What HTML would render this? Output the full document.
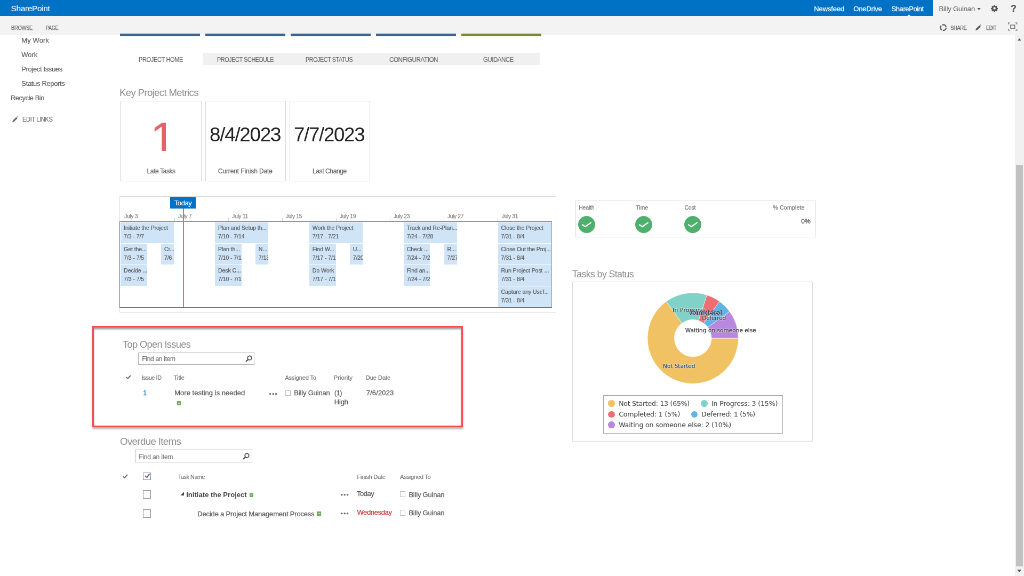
<!DOCTYPE html>
<html lang="en"><head><meta charset="utf-8"><title>Project Home - SharePoint</title>
<style>
html,body{margin:0;padding:0;width:1024px;height:576px;overflow:hidden;background:#fff;}
#stage{-webkit-text-stroke:0.25px;filter:blur(0.4px);will-change:transform;position:absolute;left:0;top:0;width:1920px;height:1080px;transform:scale(0.533333);transform-origin:0 0;font-family:"Liberation Sans", sans-serif;overflow:hidden;background:#fff;}
#stage div,#stage span,#stage svg{box-sizing:border-box;}
</style></head><body><div id="stage">
<header class="suite-bar" aria-label="SharePoint suite bar">
<div style="position:absolute;left:0.00px;top:0.00px;width:1920.00px;height:30.00px;background:#f3f3f3;"></div>
<div style="position:absolute;left:0.00px;top:0.00px;width:1749.38px;height:30.00px;background:#0072c6;"></div>
<svg style="position:absolute;left:1831.69px;top:14.81px;width:6.94px;height:3.94px" viewBox="0 0 10 6"><path d="M0 0H10L5 6Z" fill="#555"/></svg>
<svg style="position:absolute;left:1858.31px;top:8.62px;width:13.12px;height:13.12px" viewBox="0 0 24 24"><path fill="#555" fill-rule="evenodd" d="M10 1h4l.6 3 1.9.8 2.5-1.7 2.9 2.9-1.7 2.500.8 1.900 3 .6v4l-3 .6-.8 1.900 1.700 2.500-2.900 2.900-2.500-1.700-1.900.8-.600 3h-4l-.6-3-1.900-.8-2.500 1.700-2.900-2.900 1.700-2.500-.8-1.900-3-.6v-4l3-.6.8-1.900-1.700-2.500 2.900-2.900 2.500 1.700 1.900-.8zM12 8a4 4 0 100 8 4 4 0 000-8z"/></svg>
<span style="position:absolute;left:20.62px;top:8.44px;font-size:15.5px;line-height:15.5px;color:#fff;white-space:nowrap;letter-spacing:-0.40px;-webkit-text-stroke:0.100px;">SharePoint</span>
<span style="position:absolute;left:1526.25px;top:9.62px;font-size:13px;line-height:13px;color:#fff;white-space:nowrap;letter-spacing:-0.12px;">Newsfeed</span>
<span style="position:absolute;left:1600.31px;top:9.62px;font-size:13px;line-height:13px;color:#fff;white-space:nowrap;letter-spacing:-0.21px;">OneDrive</span>
<span style="position:absolute;left:1671.56px;top:9.62px;font-size:13px;line-height:13px;color:#fff;white-space:nowrap;letter-spacing:-0.42px;">SharePoint</span>
<span style="position:absolute;left:1760.62px;top:9.62px;font-size:13px;line-height:13px;color:#6e6e6e;white-space:nowrap;letter-spacing:-0.17px;-webkit-text-stroke:0.150px;">Billy Guinan</span>
<span style="position:absolute;left:1894.88px;top:6.51px;font-size:18px;line-height:18px;color:#555;white-space:nowrap;font-weight:700;">?</span>
</header>
<div class="ribbon-row" aria-label="Ribbon">
<div style="position:absolute;left:0.00px;top:30.00px;width:1920.00px;height:34.50px;background:#f3f3f3;"></div>
<svg style="position:absolute;left:1761.38px;top:44.06px;width:15.37px;height:15.37px" viewBox="0 0 16 16"><circle cx="8" cy="8" r="5.500" fill="none" stroke="#5e5e5e" stroke-width="2.500" stroke-dasharray="9.300 2.200"/></svg>
<svg style="position:absolute;left:1829.44px;top:45.75px;width:11.25px;height:11.25px" viewBox="0 0 12 12"><path d="M0 12l1-3.500 7-7 2.500 2.500-7 7zM9 .5l1-.5 2 2-.5 1z" fill="#555"/></svg>
<svg style="position:absolute;left:1890.00px;top:42.00px;width:17.62px;height:15.75px" viewBox="0 0 19 17"><g fill="none" stroke="#666" stroke-width="1.500"><rect x="5.300" y="5.400" width="8.400" height="6.600"/><path d="M1 4V1h3M15 1h3v3M18 13v3h-3M4 16H1v-3"/></g></svg>
<span style="position:absolute;left:20.62px;top:47.13px;font-size:11px;line-height:11px;color:#666;white-space:nowrap;letter-spacing:-0.39px;transform-origin:0 0;transform:scaleX(0.8581);">BROWSE</span>
<span style="position:absolute;left:86.25px;top:47.13px;font-size:11px;line-height:11px;color:#666;white-space:nowrap;letter-spacing:-0.39px;transform-origin:0 0;transform:scaleX(0.8192);">PAGE</span>
<span style="position:absolute;left:1782.38px;top:46.75px;font-size:11px;line-height:11px;color:#666;white-space:nowrap;letter-spacing:-0.39px;transform-origin:0 0;transform:scaleX(0.8559);">SHARE</span>
<span style="position:absolute;left:1848.75px;top:46.75px;font-size:11px;line-height:11px;color:#666;white-space:nowrap;letter-spacing:-0.39px;transform-origin:0 0;transform:scaleX(0.8156);">EDIT</span>
</div>
<nav class="quick-launch" aria-label="Quick launch">
<svg style="position:absolute;left:22.88px;top:217.50px;width:11.25px;height:11.25px" viewBox="0 0 12 12"><path d="M0 12l1-3.500 7-7 2.500 2.500-7 7zM9 .5l1-.5 2 2-.5 1z" fill="#6a6a6a"/></svg>
<span style="position:absolute;left:40.31px;top:68.68px;font-size:13px;line-height:13px;color:#606060;white-space:nowrap;letter-spacing:0.09px;-webkit-text-stroke:0.200px;">My Work</span>
<span style="position:absolute;left:40.31px;top:95.68px;font-size:13px;line-height:13px;color:#606060;white-space:nowrap;letter-spacing:-0.04px;-webkit-text-stroke:0.200px;">Work</span>
<span style="position:absolute;left:40.31px;top:122.59px;font-size:13px;line-height:13px;color:#606060;white-space:nowrap;letter-spacing:-0.37px;-webkit-text-stroke:0.200px;">Project Issues</span>
<span style="position:absolute;left:40.31px;top:149.50px;font-size:13px;line-height:13px;color:#606060;white-space:nowrap;letter-spacing:-0.34px;-webkit-text-stroke:0.200px;">Status Reports</span>
<span style="position:absolute;left:19.88px;top:176.50px;font-size:13px;line-height:13px;color:#606060;white-space:nowrap;letter-spacing:-0.46px;transform-origin:0 0;transform:scaleX(0.9888);-webkit-text-stroke:0.200px;">Recycle Bin</span>
<span style="position:absolute;left:42.19px;top:218.03px;font-size:12px;line-height:12px;color:#6a6a6a;white-space:nowrap;letter-spacing:-0.42px;transform-origin:0 0;transform:scaleX(0.9259);-webkit-text-stroke:0.150px;">EDIT LINKS</span>
</nav>
<div class="tiles" aria-label="Navigation tiles">
<div style="position:absolute;left:225.00px;top:63.47px;width:150.00px;height:4.12px;background:#3d668f;"></div>
<div style="position:absolute;left:385.00px;top:63.47px;width:150.00px;height:4.12px;background:#3d668f;"></div>
<div style="position:absolute;left:545.00px;top:63.47px;width:150.00px;height:4.12px;background:#3d668f;"></div>
<div style="position:absolute;left:705.00px;top:63.47px;width:150.00px;height:4.12px;background:#3d668f;"></div>
<div style="position:absolute;left:865.00px;top:63.47px;width:150.00px;height:4.12px;background:#768a3a;"></div>
</div>
<div class="tabs" aria-label="Project tabs">
<div style="position:absolute;left:380.62px;top:98.62px;width:631.88px;height:23.44px;background:#f0f0f0;"></div>
<span style="position:absolute;left:260.16px;top:105.86px;font-size:12.5px;line-height:12.5px;color:#666;white-space:nowrap;letter-spacing:-0.44px;transform-origin:0 0;transform:scaleX(0.8850);-webkit-text-stroke:0.150px;">PROJECT HOME</span>
<span style="position:absolute;left:406.88px;top:105.86px;font-size:12.5px;line-height:12.5px;color:#666;white-space:nowrap;letter-spacing:-0.44px;transform-origin:0 0;transform:scaleX(0.8643);-webkit-text-stroke:0.150px;">PROJECT SCHEDULE</span>
<span style="position:absolute;left:573.28px;top:105.86px;font-size:12.5px;line-height:12.5px;color:#666;white-space:nowrap;letter-spacing:-0.44px;transform-origin:0 0;transform:scaleX(0.8571);-webkit-text-stroke:0.150px;">PROJECT STATUS</span>
<span style="position:absolute;left:729.94px;top:105.86px;font-size:12.5px;line-height:12.5px;color:#666;white-space:nowrap;letter-spacing:-0.44px;transform-origin:0 0;transform:scaleX(0.9272);-webkit-text-stroke:0.150px;">CONFIGURATION</span>
<span style="position:absolute;left:905.62px;top:105.86px;font-size:12.5px;line-height:12.5px;color:#666;white-space:nowrap;letter-spacing:-0.44px;transform-origin:0 0;transform:scaleX(0.9089);-webkit-text-stroke:0.150px;">GUIDANCE</span>
</div>
<section class="metrics" aria-label="Key Project Metrics">
<div style="position:absolute;left:224.81px;top:189.00px;width:153.56px;height:151.31px;border:1.300px solid #d6d6d6;background:#fff;"></div>
<div style="position:absolute;left:384.75px;top:189.00px;width:151.13px;height:151.31px;border:1.300px solid #d6d6d6;background:#fff;"></div>
<div style="position:absolute;left:542.62px;top:189.00px;width:151.50px;height:151.31px;border:1.300px solid #d6d6d6;background:#fff;"></div>
<div style="position:absolute;left:277.50px;top:215.62px;width:45.00px;height:67.31px;overflow:hidden"><span style="position:absolute;left:3.9px;top:0.0px;font-size:87px;line-height:87px;color:#e2646a;-webkit-text-stroke:0">1</span></div>
<span style="position:absolute;left:224.06px;top:164.10px;font-size:19px;line-height:19px;color:#8c8c8c;white-space:nowrap;letter-spacing:-0.67px;transform-origin:0 0;transform:scaleX(0.9796);-webkit-text-stroke:0;">Key Project Metrics</span>
<span style="position:absolute;left:392.81px;top:234.37px;font-size:37px;line-height:37px;color:#222;white-space:nowrap;letter-spacing:-1.30px;transform-origin:0 0;transform:scaleX(0.9968);-webkit-text-stroke:0;">8/4/2023</span>
<span style="position:absolute;left:550.78px;top:234.37px;font-size:37px;line-height:37px;color:#222;white-space:nowrap;letter-spacing:-1.30px;transform-origin:0 0;transform:scaleX(0.9898);-webkit-text-stroke:0;">7/7/2023</span>
<span style="position:absolute;left:275.62px;top:314.97px;font-size:12px;line-height:12px;color:#666;white-space:nowrap;letter-spacing:-0.41px;">Late Tasks</span>
<span style="position:absolute;left:408.75px;top:314.97px;font-size:12px;line-height:12px;color:#666;white-space:nowrap;letter-spacing:-0.10px;">Current Finish Date</span>
<span style="position:absolute;left:585.94px;top:314.97px;font-size:12px;line-height:12px;color:#666;white-space:nowrap;letter-spacing:-0.38px;">Last Change</span>
</section>
<section class="timeline" aria-label="Timeline">
<div style="position:absolute;left:223.69px;top:367.88px;width:819.19px;height:218.25px;border:1px solid #dcdcdc;background:#fff;"></div>
<div style="position:absolute;left:326.68px;top:407.81px;width:1.01px;height:8.44px;background:#d2d2d2;"></div>
<div style="position:absolute;left:427.74px;top:407.81px;width:1.01px;height:8.44px;background:#d2d2d2;"></div>
<div style="position:absolute;left:528.81px;top:407.81px;width:1.01px;height:8.44px;background:#d2d2d2;"></div>
<div style="position:absolute;left:629.87px;top:407.81px;width:1.01px;height:8.44px;background:#d2d2d2;"></div>
<div style="position:absolute;left:730.93px;top:407.81px;width:1.01px;height:8.44px;background:#d2d2d2;"></div>
<div style="position:absolute;left:831.99px;top:407.81px;width:1.01px;height:8.44px;background:#d2d2d2;"></div>
<div style="position:absolute;left:933.06px;top:407.81px;width:1.01px;height:8.44px;background:#d2d2d2;"></div>
<div style="position:absolute;left:226.12px;top:416.81px;width:100.05px;height:39.56px;background:#cfe4f6;overflow:hidden;"><span style="position:absolute;left:6.0px;top:3.2px;font-size:10.6px;line-height:15.94px;color:#5a5a5a;-webkit-text-stroke:0.200px;white-space:nowrap;letter-spacing:-0.1px">Initiate the Project<br>7/3 - 7/7</span></div>
<div style="position:absolute;left:226.12px;top:457.03px;width:49.77px;height:39.28px;background:#cfe4f6;overflow:hidden;"><span style="position:absolute;left:6.0px;top:3.2px;font-size:10.6px;line-height:15.94px;color:#5a5a5a;-webkit-text-stroke:0.200px;white-space:nowrap;letter-spacing:-0.1px">Get the...<br>7/3 - 7/5</span></div>
<div style="position:absolute;left:301.92px;top:457.03px;width:24.26px;height:39.28px;background:#cfe4f6;overflow:hidden;"><span style="position:absolute;left:6.0px;top:3.2px;font-size:10.6px;line-height:15.94px;color:#5a5a5a;-webkit-text-stroke:0.200px;white-space:nowrap;letter-spacing:-0.1px">Cr...<br>7/6</span></div>
<div style="position:absolute;left:226.12px;top:496.97px;width:49.77px;height:39.28px;background:#cfe4f6;overflow:hidden;"><span style="position:absolute;left:6.0px;top:3.2px;font-size:10.6px;line-height:15.94px;color:#5a5a5a;-webkit-text-stroke:0.200px;white-space:nowrap;letter-spacing:-0.1px">Decide ...<br>7/3 - 7/5</span></div>
<div style="position:absolute;left:402.98px;top:416.81px;width:100.05px;height:39.56px;background:#cfe4f6;overflow:hidden;"><span style="position:absolute;left:6.0px;top:3.2px;font-size:10.6px;line-height:15.94px;color:#5a5a5a;-webkit-text-stroke:0.200px;white-space:nowrap;letter-spacing:-0.1px">Plan and Setup th...<br>7/10 - 7/14</span></div>
<div style="position:absolute;left:402.98px;top:457.03px;width:49.77px;height:39.28px;background:#cfe4f6;overflow:hidden;"><span style="position:absolute;left:6.0px;top:3.2px;font-size:10.6px;line-height:15.94px;color:#5a5a5a;-webkit-text-stroke:0.200px;white-space:nowrap;letter-spacing:-0.1px">Plan th...<br>7/10 - 7/12</span></div>
<div style="position:absolute;left:478.78px;top:457.03px;width:24.26px;height:39.28px;background:#cfe4f6;overflow:hidden;"><span style="position:absolute;left:6.0px;top:3.2px;font-size:10.6px;line-height:15.94px;color:#5a5a5a;-webkit-text-stroke:0.200px;white-space:nowrap;letter-spacing:-0.1px">N...<br>7/13</span></div>
<div style="position:absolute;left:402.98px;top:496.97px;width:49.77px;height:39.28px;background:#cfe4f6;overflow:hidden;"><span style="position:absolute;left:6.0px;top:3.2px;font-size:10.6px;line-height:15.94px;color:#5a5a5a;-webkit-text-stroke:0.200px;white-space:nowrap;letter-spacing:-0.1px">Desk C...<br>7/10 - 7/12</span></div>
<div style="position:absolute;left:579.84px;top:416.81px;width:100.05px;height:39.56px;background:#cfe4f6;overflow:hidden;"><span style="position:absolute;left:6.0px;top:3.2px;font-size:10.6px;line-height:15.94px;color:#5a5a5a;-webkit-text-stroke:0.200px;white-space:nowrap;letter-spacing:-0.1px">Work the Project<br>7/17 - 7/21</span></div>
<div style="position:absolute;left:579.84px;top:457.03px;width:49.77px;height:39.28px;background:#cfe4f6;overflow:hidden;"><span style="position:absolute;left:6.0px;top:3.2px;font-size:10.6px;line-height:15.94px;color:#5a5a5a;-webkit-text-stroke:0.200px;white-space:nowrap;letter-spacing:-0.1px">Find W...<br>7/17 - 7/19</span></div>
<div style="position:absolute;left:655.64px;top:457.03px;width:24.26px;height:39.28px;background:#cfe4f6;overflow:hidden;"><span style="position:absolute;left:6.0px;top:3.2px;font-size:10.6px;line-height:15.94px;color:#5a5a5a;-webkit-text-stroke:0.200px;white-space:nowrap;letter-spacing:-0.1px">U...<br>7/20</span></div>
<div style="position:absolute;left:579.84px;top:496.97px;width:49.77px;height:39.28px;background:#cfe4f6;overflow:hidden;"><span style="position:absolute;left:6.0px;top:3.2px;font-size:10.6px;line-height:15.94px;color:#5a5a5a;-webkit-text-stroke:0.200px;white-space:nowrap;letter-spacing:-0.1px">Do Work<br>7/17 - 7/19</span></div>
<div style="position:absolute;left:756.70px;top:416.81px;width:100.05px;height:39.56px;background:#cfe4f6;overflow:hidden;"><span style="position:absolute;left:6.0px;top:3.2px;font-size:10.6px;line-height:15.94px;color:#5a5a5a;-webkit-text-stroke:0.200px;white-space:nowrap;letter-spacing:-0.1px">Track and Re-Plan...<br>7/24 - 7/28</span></div>
<div style="position:absolute;left:756.70px;top:457.03px;width:49.77px;height:39.28px;background:#cfe4f6;overflow:hidden;"><span style="position:absolute;left:6.0px;top:3.2px;font-size:10.6px;line-height:15.94px;color:#5a5a5a;-webkit-text-stroke:0.200px;white-space:nowrap;letter-spacing:-0.1px">Check ...<br>7/24 - 7/26</span></div>
<div style="position:absolute;left:832.50px;top:457.03px;width:24.26px;height:39.28px;background:#cfe4f6;overflow:hidden;"><span style="position:absolute;left:6.0px;top:3.2px;font-size:10.6px;line-height:15.94px;color:#5a5a5a;-webkit-text-stroke:0.200px;white-space:nowrap;letter-spacing:-0.1px">R...<br>7/27</span></div>
<div style="position:absolute;left:756.70px;top:496.97px;width:49.77px;height:39.28px;background:#cfe4f6;overflow:hidden;"><span style="position:absolute;left:6.0px;top:3.2px;font-size:10.6px;line-height:15.94px;color:#5a5a5a;-webkit-text-stroke:0.200px;white-space:nowrap;letter-spacing:-0.1px">Find an...<br>7/24 - 7/26</span></div>
<div style="position:absolute;left:933.56px;top:416.81px;width:101.06px;height:39.56px;background:#cfe4f6;overflow:hidden;"><span style="position:absolute;left:6.0px;top:3.2px;font-size:10.6px;line-height:15.94px;color:#5a5a5a;-webkit-text-stroke:0.200px;white-space:nowrap;letter-spacing:-0.1px">Close the Project<br>7/31 - 8/4</span></div>
<div style="position:absolute;left:933.56px;top:457.03px;width:101.06px;height:39.28px;background:#cfe4f6;overflow:hidden;"><span style="position:absolute;left:6.0px;top:3.2px;font-size:10.6px;line-height:15.94px;color:#5a5a5a;-webkit-text-stroke:0.200px;white-space:nowrap;letter-spacing:-0.1px">Close Out the Proj...<br>7/31 - 8/4</span></div>
<div style="position:absolute;left:933.56px;top:496.97px;width:101.06px;height:39.28px;background:#cfe4f6;overflow:hidden;"><span style="position:absolute;left:6.0px;top:3.2px;font-size:10.6px;line-height:15.94px;color:#5a5a5a;-webkit-text-stroke:0.200px;white-space:nowrap;letter-spacing:-0.1px">Run Project Post-...<br>7/31 - 8/4</span></div>
<div style="position:absolute;left:933.56px;top:536.91px;width:101.06px;height:38.72px;background:#cfe4f6;overflow:hidden;"><span style="position:absolute;left:6.0px;top:3.2px;font-size:10.6px;line-height:15.94px;color:#5a5a5a;-webkit-text-stroke:0.200px;white-space:nowrap;letter-spacing:-0.1px">Capture any Usef...<br>7/31 - 8/4</span></div>
<div style="position:absolute;left:224.44px;top:415.31px;width:810.75px;height:161.81px;border:1.700px solid #6c6c6c;border-top-color:#7c7c7c;border-right-color:#8a96a2;border-left-width:1.500px;background:transparent;"></div>
<div style="position:absolute;left:318.75px;top:369.38px;width:48.38px;height:21.94px;background:#0072c6;"></div>
<div style="position:absolute;left:342.75px;top:391.31px;width:2.25px;height:184.31px;background:#5a9de0;"></div>
<span style="position:absolute;left:233.06px;top:399.98px;font-size:10.8px;line-height:10.8px;color:#828282;white-space:nowrap;letter-spacing:-0.38px;transform-origin:0 0;transform:scaleX(0.9685);-webkit-text-stroke:0.250px;">July 3</span>
<span style="position:absolute;left:334.12px;top:399.98px;font-size:10.8px;line-height:10.8px;color:#828282;white-space:nowrap;letter-spacing:-0.38px;transform-origin:0 0;transform:scaleX(0.9685);-webkit-text-stroke:0.250px;">July 7</span>
<span style="position:absolute;left:435.19px;top:399.98px;font-size:10.8px;line-height:10.8px;color:#828282;white-space:nowrap;letter-spacing:-0.38px;transform-origin:0 0;transform:scaleX(0.9750);-webkit-text-stroke:0.250px;">July 11</span>
<span style="position:absolute;left:536.25px;top:399.98px;font-size:10.8px;line-height:10.8px;color:#828282;white-space:nowrap;letter-spacing:-0.38px;transform-origin:0 0;transform:scaleX(0.9507);-webkit-text-stroke:0.250px;">July 15</span>
<span style="position:absolute;left:637.31px;top:399.98px;font-size:10.8px;line-height:10.8px;color:#828282;white-space:nowrap;letter-spacing:-0.38px;transform-origin:0 0;transform:scaleX(0.9507);-webkit-text-stroke:0.250px;">July 19</span>
<span style="position:absolute;left:738.38px;top:399.98px;font-size:10.8px;line-height:10.8px;color:#828282;white-space:nowrap;letter-spacing:-0.38px;transform-origin:0 0;transform:scaleX(0.9507);-webkit-text-stroke:0.250px;">July 23</span>
<span style="position:absolute;left:839.44px;top:399.98px;font-size:10.8px;line-height:10.8px;color:#828282;white-space:nowrap;letter-spacing:-0.38px;transform-origin:0 0;transform:scaleX(0.9507);-webkit-text-stroke:0.250px;">July 27</span>
<span style="position:absolute;left:940.50px;top:399.98px;font-size:10.8px;line-height:10.8px;color:#828282;white-space:nowrap;letter-spacing:-0.38px;transform-origin:0 0;transform:scaleX(0.9507);-webkit-text-stroke:0.250px;">July 31</span>
<span style="position:absolute;left:326.81px;top:374.12px;font-size:13px;line-height:13px;color:#fff;white-space:nowrap;letter-spacing:-0.43px;-webkit-text-stroke:0.100px;">Today</span>
</section>
<section class="health" aria-label="Project health">
<div style="position:absolute;left:1078.88px;top:375.56px;width:451.13px;height:69.94px;border:1px solid #dcdcdc;background:#fff;"></div>
<svg style="position:absolute;left:1083.75px;top:405.00px;width:31.88px;height:31.88px" viewBox="0 0 34 34"><circle cx="17" cy="17" r="17" fill="#4fb06d"/><path d="M8.600 17.600L14.200 21.300L25.400 13.500" fill="none" stroke="#fff" stroke-width="2.500" stroke-linecap="round" stroke-linejoin="round"/></svg>
<svg style="position:absolute;left:1191.09px;top:405.00px;width:31.88px;height:31.88px" viewBox="0 0 34 34"><circle cx="17" cy="17" r="17" fill="#4fb06d"/><path d="M8.600 17.600L14.200 21.300L25.400 13.500" fill="none" stroke="#fff" stroke-width="2.500" stroke-linecap="round" stroke-linejoin="round"/></svg>
<svg style="position:absolute;left:1282.97px;top:405.00px;width:31.88px;height:31.88px" viewBox="0 0 34 34"><circle cx="17" cy="17" r="17" fill="#4fb06d"/><path d="M8.600 17.600L14.200 21.300L25.400 13.500" fill="none" stroke="#fff" stroke-width="2.500" stroke-linecap="round" stroke-linejoin="round"/></svg>
<span style="position:absolute;left:1085.16px;top:383.55px;font-size:10.5px;line-height:10.5px;color:#777;white-space:nowrap;letter-spacing:-0.18px;">Health</span>
<span style="position:absolute;left:1192.03px;top:383.55px;font-size:10.5px;line-height:10.5px;color:#777;white-space:nowrap;letter-spacing:0.04px;">Time</span>
<span style="position:absolute;left:1283.44px;top:383.55px;font-size:10.5px;line-height:10.5px;color:#777;white-space:nowrap;letter-spacing:-0.20px;">Cost</span>
<span style="position:absolute;left:1449.38px;top:383.55px;font-size:10.5px;line-height:10.5px;color:#777;white-space:nowrap;letter-spacing:0.21px;">% Complete</span>
<span style="position:absolute;left:1502.34px;top:408.72px;font-size:12px;line-height:12px;color:#444;white-space:nowrap;letter-spacing:-0.09px;">0%</span>
</section>
<section class="tasks-by-status" aria-label="Tasks by Status">
<div style="position:absolute;left:1073.06px;top:528.19px;width:450.94px;height:299.44px;border:1px solid #dcdcdc;background:#fff;"></div>
<svg style="position:absolute;left:0;top:0;width:1920px;height:1080px;overflow:visible" viewBox="0 0 1024 576"><path d="M738.30 338.20A45.4 45.4 0 1 1 666.21 301.47L682.03 323.23A18.5 18.5 0 1 0 711.40 338.20Z" fill="#f0c264" stroke="#fff" stroke-width="0.35"/><path d="M666.21 301.47A45.4 45.4 0 0 1 706.93 295.02L698.62 320.61A18.5 18.5 0 0 0 682.03 323.23Z" fill="#80d2c8" stroke="#fff" stroke-width="0.35"/><path d="M706.93 295.02A45.4 45.4 0 0 1 719.59 301.47L703.77 323.23A18.5 18.5 0 0 0 698.62 320.61Z" fill="#ec6f74" stroke="#fff" stroke-width="0.35"/><path d="M719.59 301.47A45.4 45.4 0 0 1 729.63 311.51L707.87 327.33A18.5 18.5 0 0 0 703.77 323.23Z" fill="#5fb4e6" stroke="#fff" stroke-width="0.35"/><path d="M729.63 311.51A45.4 45.4 0 0 1 738.30 338.20L711.40 338.20A18.5 18.5 0 0 0 707.87 327.33Z" fill="#b888e0" stroke="#fff" stroke-width="0.35"/></svg>
<div style="position:absolute;left:1130.62px;top:741.19px;width:336.94px;height:71.62px;border:1.700px solid #a6a6a6;background:#fff;"></div>
<div style="position:absolute;left:1140.19px;top:750.00px;width:12.75px;height:12.75px;background:#f0c264;border-radius:50%;"></div>
<div style="position:absolute;left:1314.38px;top:750.00px;width:12.75px;height:12.75px;background:#80d2c8;border-radius:50%;"></div>
<div style="position:absolute;left:1140.19px;top:770.62px;width:12.75px;height:12.75px;background:#ec6f74;border-radius:50%;"></div>
<div style="position:absolute;left:1295.62px;top:770.62px;width:12.75px;height:12.75px;background:#5fb4e6;border-radius:50%;"></div>
<div style="position:absolute;left:1140.19px;top:790.13px;width:12.75px;height:12.75px;background:#b888e0;border-radius:50%;"></div>
<span style="position:absolute;left:1073.44px;top:503.85px;font-size:19px;line-height:19px;color:#8c8c8c;white-space:nowrap;letter-spacing:-0.67px;transform-origin:0 0;transform:scaleX(0.9356);-webkit-text-stroke:0;">Tasks by Status</span>
<span style="position:absolute;left:1260.94px;top:575.97px;font-size:10.5px;line-height:10.5px;color:#333;white-space:nowrap;font-family:&quot;DejaVu Sans&quot;, &quot;Liberation Sans&quot;, sans-serif;letter-spacing:0.36px;text-shadow:0 0 1.500px #fff,0 0 1.500px #fff,0 0 2px #fff;">In Progress</span>
<span style="position:absolute;left:1293.75px;top:581.22px;font-size:10.5px;line-height:10.5px;color:#dfe6f2;white-space:nowrap;font-family:&quot;DejaVu Sans&quot;, &quot;Liberation Sans&quot;, sans-serif;letter-spacing:0.27px;-webkit-text-stroke:0;text-shadow:1.3px 0px 0.4px #36435e,-1.3px 0px 0.4px #36435e,0px 1.3px 0.4px #36435e,0px -1.3px 0.4px #36435e,1px 1px 0.4px #36435e,-1px 1px 0.4px #36435e,1px -1px 0.4px #36435e,-1px -1px 0.4px #36435e;">Completed</span>
<span style="position:absolute;left:1316.25px;top:590.78px;font-size:10.5px;line-height:10.5px;color:#333;white-space:nowrap;font-family:&quot;DejaVu Sans&quot;, &quot;Liberation Sans&quot;, sans-serif;letter-spacing:-0.15px;text-shadow:0 0 1.500px #fff,0 0 1.500px #fff,0 0 2px #fff;">Deferred</span>
<span style="position:absolute;left:1284.75px;top:614.41px;font-size:10.5px;line-height:10.5px;color:#333;white-space:nowrap;font-family:&quot;DejaVu Sans&quot;, &quot;Liberation Sans&quot;, sans-serif;letter-spacing:0.05px;text-shadow:0 0 1.500px #fff,0 0 1.500px #fff,0 0 2px #fff;">Waiting on someone else</span>
<span style="position:absolute;left:1243.12px;top:681.35px;font-size:10.5px;line-height:10.5px;color:#2a3a6a;white-space:nowrap;font-family:&quot;DejaVu Sans&quot;, &quot;Liberation Sans&quot;, sans-serif;letter-spacing:-0.03px;text-shadow:0 0 1.500px #fff,0 0 1.500px #fff,0 0 2px #fff;">Not Started</span>
<span style="position:absolute;left:1160.16px;top:750.50px;font-size:12.5px;line-height:12.5px;color:#484848;white-space:nowrap;font-family:&quot;DejaVu Sans&quot;, &quot;Liberation Sans&quot;, sans-serif;letter-spacing:-0.23px;-webkit-text-stroke:0.100px;">Not Started: 13 (65%)</span>
<span style="position:absolute;left:1334.06px;top:750.50px;font-size:12.5px;line-height:12.5px;color:#484848;white-space:nowrap;font-family:&quot;DejaVu Sans&quot;, &quot;Liberation Sans&quot;, sans-serif;letter-spacing:-0.12px;-webkit-text-stroke:0.100px;">In Progress: 3 (15%)</span>
<span style="position:absolute;left:1160.16px;top:771.12px;font-size:12.5px;line-height:12.5px;color:#484848;white-space:nowrap;font-family:&quot;DejaVu Sans&quot;, &quot;Liberation Sans&quot;, sans-serif;letter-spacing:-0.16px;-webkit-text-stroke:0.100px;">Completed: 1 (5%)</span>
<span style="position:absolute;left:1315.31px;top:771.12px;font-size:12.5px;line-height:12.5px;color:#484848;white-space:nowrap;font-family:&quot;DejaVu Sans&quot;, &quot;Liberation Sans&quot;, sans-serif;letter-spacing:-0.24px;-webkit-text-stroke:0.100px;">Deferred: 1 (5%)</span>
<span style="position:absolute;left:1160.16px;top:790.63px;font-size:12.5px;line-height:12.5px;color:#484848;white-space:nowrap;font-family:&quot;DejaVu Sans&quot;, &quot;Liberation Sans&quot;, sans-serif;letter-spacing:-0.12px;-webkit-text-stroke:0.100px;">Waiting on someone else: 2 (10%)</span>
</section>
<div class="highlight" aria-label="Highlight">
<div style="position:absolute;left:172.50px;top:611.06px;width:695.62px;height:189.56px;border:3.700px solid #f64a4f;box-shadow:0 3.500px 3px rgba(60,70,65,.38), inset 0 3.500px 3px rgba(60,70,65,.5);background:transparent;"></div>
</div>
<section class="open-issues" aria-label="Top Open Issues">
<div style="position:absolute;left:258.75px;top:661.12px;width:218.44px;height:23.25px;border:1px solid #b2b2b2;background:#fff;"></div>
<svg style="position:absolute;left:459.75px;top:666.19px;width:13.12px;height:13.12px" viewBox="0 0 14 14"><circle cx="8.500" cy="5.500" r="4" fill="none" stroke="#505050" stroke-width="2"/><path d="M5.700 8.300L1.200 12.800" stroke="#505050" stroke-width="2.600" fill="none"/></svg>
<svg style="position:absolute;left:235.69px;top:702.94px;width:9.75px;height:8.25px" viewBox="0 0 12 10"><path d="M1 5.200l3.400 3.300L11 1.200" fill="none" stroke="#707070" stroke-width="2.700"/></svg>
<div style="position:absolute;left:331.88px;top:752.44px;width:7.50px;height:7.31px;background:#70ad58;"><div style="position:absolute;left:32%;top:32%;width:36%;height:36%;background:#c4dfb8"></div></div>
<svg style="position:absolute;left:503.44px;top:735.19px;width:18.75px;height:7.50px" viewBox="0 0 10 4"><circle cx="2" cy="2" r="0.950" fill="#686868"/><circle cx="4.900" cy="2" r="0.950" fill="#686868"/><circle cx="7.800" cy="2" r="0.950" fill="#686868"/></svg>
<div style="position:absolute;left:534.94px;top:731.62px;width:9.94px;height:10.50px;border:1.200px solid #bdbdbd;background:#fff;"></div>
<span style="position:absolute;left:229.69px;top:636.42px;font-size:19px;line-height:19px;color:#8c8c8c;white-space:nowrap;letter-spacing:-0.67px;transform-origin:0 0;transform:scaleX(0.9601);-webkit-text-stroke:0;">Top Open Issues</span>
<span style="position:absolute;left:266.25px;top:666.53px;font-size:12px;line-height:12px;color:#707070;white-space:nowrap;letter-spacing:-0.29px;-webkit-text-stroke:0.150px;">Find an item</span>
<span style="position:absolute;left:266.25px;top:703.19px;font-size:11px;line-height:11px;color:#777;white-space:nowrap;letter-spacing:-0.39px;transform-origin:0 0;transform:scaleX(0.9832);">Issue ID</span>
<span style="position:absolute;left:325.78px;top:703.19px;font-size:11px;line-height:11px;color:#777;white-space:nowrap;letter-spacing:-0.05px;">Title</span>
<span style="position:absolute;left:534.38px;top:703.19px;font-size:11px;line-height:11px;color:#777;white-space:nowrap;letter-spacing:-0.11px;">Assigned To</span>
<span style="position:absolute;left:625.78px;top:703.19px;font-size:11px;line-height:11px;color:#777;white-space:nowrap;letter-spacing:0.13px;">Priority</span>
<span style="position:absolute;left:685.78px;top:703.19px;font-size:11px;line-height:11px;color:#777;white-space:nowrap;letter-spacing:-0.01px;">Due Date</span>
<span style="position:absolute;left:268.12px;top:730.18px;font-size:13px;line-height:13px;color:#0072c6;white-space:nowrap;">1</span>
<span style="position:absolute;left:327.19px;top:730.18px;font-size:13px;line-height:13px;color:#585858;white-space:nowrap;letter-spacing:0.03px;">More testing is needed</span>
<span style="position:absolute;left:551.25px;top:730.18px;font-size:13px;line-height:13px;color:#585858;white-space:nowrap;letter-spacing:-0.17px;">Billy Guinan</span>
<span style="position:absolute;left:626.72px;top:730.18px;font-size:13px;line-height:13px;color:#585858;white-space:nowrap;letter-spacing:-0.46px;transform-origin:0 0;transform:scaleX(0.9700);">(1)</span>
<span style="position:absolute;left:626.72px;top:747.06px;font-size:13px;line-height:13px;color:#585858;white-space:nowrap;letter-spacing:-0.17px;">High</span>
<span style="position:absolute;left:686.72px;top:730.18px;font-size:13px;line-height:13px;color:#585858;white-space:nowrap;letter-spacing:0.14px;">7/6/2023</span>
</section>
<section class="overdue" aria-label="Overdue Items">
<div style="position:absolute;left:253.12px;top:843.00px;width:220.31px;height:24.19px;border:1px solid #b2b2b2;background:#fff;"></div>
<svg style="position:absolute;left:454.69px;top:849.00px;width:13.12px;height:13.12px" viewBox="0 0 14 14"><circle cx="8.500" cy="5.500" r="4" fill="none" stroke="#505050" stroke-width="2"/><path d="M5.700 8.300L1.200 12.800" stroke="#505050" stroke-width="2.600" fill="none"/></svg>
<svg style="position:absolute;left:230.25px;top:888.75px;width:9.75px;height:8.25px" viewBox="0 0 12 10"><path d="M1 5.200l3.400 3.300L11 1.200" fill="none" stroke="#707070" stroke-width="2.700"/></svg>
<div style="position:absolute;left:268.12px;top:886.12px;width:15.37px;height:13.87px;border:1.500px solid #8a8a8a;background:#fff;"><svg style="position:absolute;left:1px;top:0px;width:12px;height:11px" viewBox="0 0 12 11"><path d="M2 5l3 3.500" stroke="#d9534f" stroke-width="2.200" fill="none"/><path d="M5 8.500L10.500 1.500" stroke="#3b78c4" stroke-width="2.200" fill="none"/></svg></div>
<div style="position:absolute;left:268.12px;top:919.31px;width:15.00px;height:15.94px;border:1.700px solid #909090;background:#fff;"></div>
<div style="position:absolute;left:268.12px;top:954.94px;width:15.00px;height:15.94px;border:1.700px solid #909090;background:#fff;"></div>
<svg style="position:absolute;left:337.88px;top:921.94px;width:7.50px;height:6.94px" viewBox="0 0 6 6"><path d="M6 0V6H0Z" fill="#444"/></svg>
<div style="position:absolute;left:467.81px;top:924.38px;width:7.50px;height:7.50px;background:#70ad58;"><div style="position:absolute;left:32%;top:32%;width:36%;height:36%;background:#c4dfb8"></div></div>
<div style="position:absolute;left:594.38px;top:959.25px;width:7.87px;height:7.69px;background:#70ad58;"><div style="position:absolute;left:32%;top:32%;width:36%;height:36%;background:#c4dfb8"></div></div>
<svg style="position:absolute;left:636.94px;top:923.81px;width:18.75px;height:7.50px" viewBox="0 0 10 4"><circle cx="2" cy="2" r="0.950" fill="#686868"/><circle cx="4.900" cy="2" r="0.950" fill="#686868"/><circle cx="7.800" cy="2" r="0.950" fill="#686868"/></svg>
<svg style="position:absolute;left:636.94px;top:958.69px;width:18.75px;height:7.50px" viewBox="0 0 10 4"><circle cx="2" cy="2" r="0.950" fill="#686868"/><circle cx="4.900" cy="2" r="0.950" fill="#686868"/><circle cx="7.800" cy="2" r="0.950" fill="#686868"/></svg>
<div style="position:absolute;left:749.81px;top:921.38px;width:10.13px;height:10.50px;border:1.200px solid #bdbdbd;background:#fff;"></div>
<div style="position:absolute;left:749.81px;top:956.44px;width:10.13px;height:10.50px;border:1.200px solid #bdbdbd;background:#fff;"></div>
<span style="position:absolute;left:225.00px;top:817.92px;font-size:19px;line-height:19px;color:#8c8c8c;white-space:nowrap;letter-spacing:-0.67px;transform-origin:0 0;transform:scaleX(0.9847);-webkit-text-stroke:0;">Overdue Items</span>
<span style="position:absolute;left:260.16px;top:850.65px;font-size:12px;line-height:12px;color:#707070;white-space:nowrap;letter-spacing:-0.16px;-webkit-text-stroke:0.150px;">Find an item</span>
<span style="position:absolute;left:333.75px;top:889.38px;font-size:11px;line-height:11px;color:#777;white-space:nowrap;letter-spacing:-0.39px;transform-origin:0 0;transform:scaleX(0.9745);">Task Name</span>
<span style="position:absolute;left:669.38px;top:889.38px;font-size:11px;line-height:11px;color:#777;white-space:nowrap;letter-spacing:-0.22px;">Finish Date</span>
<span style="position:absolute;left:750.00px;top:889.38px;font-size:11px;line-height:11px;color:#777;white-space:nowrap;letter-spacing:-0.21px;">Assigned To</span>
<span style="position:absolute;left:349.22px;top:921.06px;font-size:13px;line-height:13px;color:#444;white-space:nowrap;font-weight:700;letter-spacing:0.04px;-webkit-text-stroke:0;">Initiate the Project</span>
<span style="position:absolute;left:370.31px;top:956.68px;font-size:13px;line-height:13px;color:#585858;white-space:nowrap;letter-spacing:-0.18px;">Decide a Project Management Process</span>
<span style="position:absolute;left:669.38px;top:919.18px;font-size:13px;line-height:13px;color:#585858;white-space:nowrap;letter-spacing:-0.46px;transform-origin:0 0;transform:scaleX(0.9979);">Today</span>
<span style="position:absolute;left:669.38px;top:954.06px;font-size:13px;line-height:13px;color:#c9393a;white-space:nowrap;letter-spacing:-0.35px;">Wednesday</span>
<span style="position:absolute;left:766.41px;top:920.50px;font-size:13px;line-height:13px;color:#585858;white-space:nowrap;letter-spacing:-0.21px;">Billy Guinan</span>
<span style="position:absolute;left:766.41px;top:955.00px;font-size:13px;line-height:13px;color:#585858;white-space:nowrap;letter-spacing:-0.21px;">Billy Guinan</span>
</section>
<div class="scrollbar" aria-label="Scrollbar">
<div style="position:absolute;left:1903.12px;top:64.50px;width:16.88px;height:1015.50px;background:#f1f1f1;"></div>
<div style="position:absolute;left:1905.38px;top:309.00px;width:12.75px;height:753.19px;background:#c1c1c1;"></div>
<svg style="position:absolute;left:1907.25px;top:71.62px;width:8.62px;height:4.88px" viewBox="0 0 10 6"><path d="M0 6H10L5 0Z" fill="#505050"/></svg>
<svg style="position:absolute;left:1907.25px;top:1068.38px;width:8.62px;height:4.88px" viewBox="0 0 10 6"><path d="M0 0H10L5 6Z" fill="#505050"/></svg>
<svg style="position:absolute;left:1701.19px;top:27.00px;width:6.75px;height:3.38px" viewBox="0 0 10 5"><path d="M0 5H10L5 0Z" fill="#f3f3f3"/></svg>
</div>
</div></body></html>
